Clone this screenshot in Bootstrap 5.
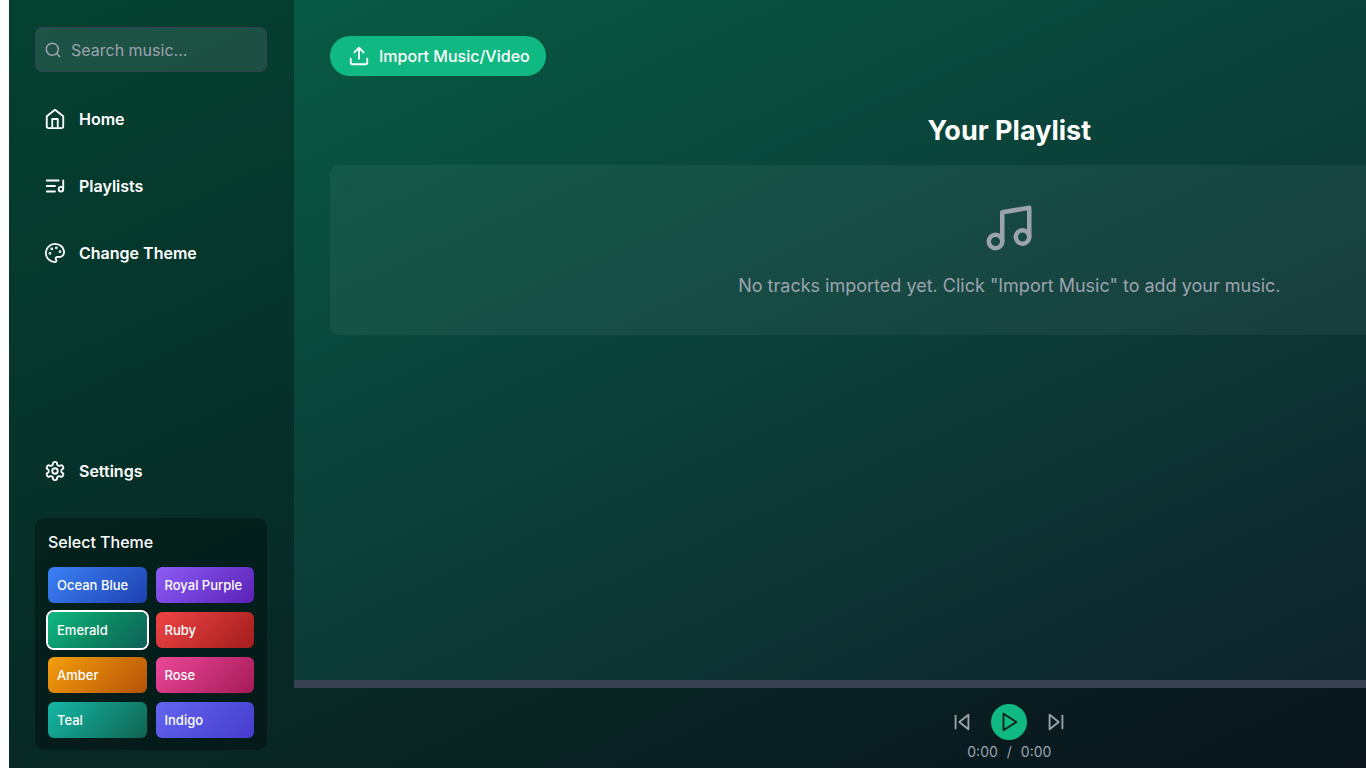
<!DOCTYPE html>
<html lang="en">
<head>
<meta charset="utf-8">
<meta name="viewport" content="width=device-width, initial-scale=1">
<title>Music Player</title>
<link href="https://cdn.jsdelivr.net/npm/bootstrap@5.3.0/dist/css/bootstrap.min.css" rel="stylesheet">
<style>
  body { font-family: Inter, "Liberation Sans", sans-serif; font-size: 16px; line-height: 24px; color: #fff; background: #fff; }
  svg { fill: none; stroke: currentColor; stroke-width: 2; stroke-linecap: round; stroke-linejoin: round; flex-shrink: 0; display: block; }
  .viewport { margin-left: 9px; overflow: hidden; }
  /* the player is wider than the window; its right part is clipped */
  .player { width: 125.6vw; height: 100vh; background: linear-gradient(to bottom right, #065f46, #111827); }
  .sidebar { width: 285px; flex-shrink: 0; padding: 27px 27px 18px 26px; background: rgba(0,0,0,.3); }
  .search-field { height: 45px; padding: 0 8px; gap: 9px; border: 1px solid #374151; border-radius: 7px; background: rgba(255,255,255,.1); color: #9ca3af; }
  .search-field input { background: none; border: 0; padding: 0; color: #fff; outline: 0; min-width: 0; }
  .search-field input::placeholder { color: #9ca3af; opacity: 1; }
  .side-link { height: 40px; padding: 0 9px; gap: 13px; color: #fff; font-weight: 600; text-decoration: none; border: 0; background: none; }
  .side-nav { margin-top: 27px; gap: 27px; }
  .theme-panel { margin-top: 27px; padding: 12px 13px; border-radius: 9px; background: rgba(0,0,0,.3); }
  .theme-panel h2 { font-size: 16px; line-height: 24px; font-weight: 500; margin: 0 0 13px; }
  .theme-grid { display: grid; grid-template-columns: repeat(2, minmax(0, 1fr)); gap: 9px; }
  .swatch { height: 36px; padding: 0 9px; border: 0; border-radius: 6px; color: #fff; font-size: 13px; font-weight: 500; text-align: left; white-space: nowrap; }
  .swatch.selected { box-shadow: 0 0 0 2px #fff; }
  .ocean { background: linear-gradient(135deg, #3b82f6, #1e40af); }
  .royal { background: linear-gradient(135deg, #8b5cf6, #5b21b6); }
  .emerald { background: linear-gradient(135deg, #10b981, #0a8a62, #10605a); }
  .ruby { background: linear-gradient(135deg, #ef4444, #a31d1d); }
  .amber { background: linear-gradient(135deg, #f59e0b, #b45309); }
  .rose { background: linear-gradient(135deg, #ec4899, #a51a56); }
  .teal { background: linear-gradient(135deg, #14b8a6, #0f6350); }
  .indigo { background: linear-gradient(135deg, #6366f1, #463bcc); }
  .stage { padding: 36px; }
  .import-btn { height: 40px; padding: 0 16px 0 18px; gap: 9px; border: 0; background: #10b981; color: #fff; font-weight: 500; }
  .stage h1 { font-size: 27px; line-height: 36px; font-weight: 700; margin: 37px 0 16px; }
  .empty-list { padding: 36px; border-radius: 9px; background: rgba(255,255,255,.05); color: #9ca3af; font-size: 18px; line-height: 27px; }
  .empty-list p { margin: 17px 0 0; }
  .seek { height: 8px; background: #374151; }
  .controls { height: 80px; padding-top: 16px; background: rgba(0,0,0,.3); color: #9ca3af; font-size: 14px; }
  .controls button { border: 0; padding: 0; background: none; color: inherit; }
  .controls .play-btn { width: 36px; height: 36px; background: #10b981; color: #06201c; }
  .transport { gap: 18px; }
  .time-row { gap: 9px; }
</style>
</head>
<body>
<div class="viewport">
<div class="player d-flex">
  <aside class="sidebar d-flex flex-column">
    <label class="search-field d-flex align-items-center">
      <svg width="18" height="18" viewBox="0 0 24 24"><circle cx="11" cy="11" r="8"/><path d="m21 21-4.300-4.300"/></svg>
      <input class="flex-fill" type="text" placeholder="Search music..." aria-label="Search music">
    </label>
    <nav class="side-nav d-flex flex-column">
      <a class="side-link d-flex align-items-center" href="#"><svg width="22" height="22" viewBox="0 0 24 24"><path d="m3 9 9-7 9 7v11a2 2 0 0 1-2 2H5a2 2 0 0 1-2-2z"/><path d="M9 22V12h6v10"/></svg>Home</a>
      <a class="side-link d-flex align-items-center" href="#"><svg width="22" height="22" viewBox="0 0 24 24"><path d="M21 15V6"/><path d="M18.500 18a2.500 2.500 0 1 0 0-5 2.500 2.500 0 0 0 0 5Z"/><path d="M12 12H3"/><path d="M16 6H3"/><path d="M12 18H3"/></svg>Playlists</a>
      <button type="button" class="side-link d-flex align-items-center"><svg width="22" height="22" viewBox="0 0 24 24"><circle cx="13.500" cy="6.500" r=".5" fill="currentColor"/><circle cx="17.500" cy="10.500" r=".5" fill="currentColor"/><circle cx="8.500" cy="7.500" r=".5" fill="currentColor"/><circle cx="6.500" cy="12.500" r=".5" fill="currentColor"/><path d="M12 2C6.500 2 2 6.500 2 12s4.500 10 10 10c.926 0 1.648-.746 1.648-1.688 0-.437-.18-.835-.437-1.125-.29-.289-.438-.652-.438-1.125a1.640 1.640 0 0 1 1.668-1.668h1.996c3.051 0 5.555-2.503 5.555-5.554C21.965 6.012 17.461 2 12 2z"/></svg>Change Theme</button>
    </nav>
    <button type="button" class="side-link d-flex align-items-center mt-auto"><svg width="22" height="22" viewBox="0 0 24 24"><path d="M12.220 2h-.44a2 2 0 0 0-2 2v.18a2 2 0 0 1-1 1.730l-.43.25a2 2 0 0 1-2 0l-.15-.08a2 2 0 0 0-2.730.73l-.22.38a2 2 0 0 0 .73 2.730l.15.1a2 2 0 0 1 1 1.720v.51a2 2 0 0 1-1 1.740l-.15.09a2 2 0 0 0-.73 2.730l.22.38a2 2 0 0 0 2.730.73l.15-.08a2 2 0 0 1 2 0l.43.25a2 2 0 0 1 1 1.730V20a2 2 0 0 0 2 2h.44a2 2 0 0 0 2-2v-.18a2 2 0 0 1 1-1.730l.43-.25a2 2 0 0 1 2 0l.15.08a2 2 0 0 0 2.730-.73l.22-.39a2 2 0 0 0-.73-2.730l-.15-.08a2 2 0 0 1-1-1.740v-.5a2 2 0 0 1 1-1.740l.15-.09a2 2 0 0 0 .73-2.730l-.22-.38a2 2 0 0 0-2.730-.73l-.15.08a2 2 0 0 1-2 0l-.43-.25a2 2 0 0 1-1-1.730V4a2 2 0 0 0-2-2z"/><circle cx="12" cy="12" r="3"/></svg>Settings</button>
    <section class="theme-panel">
      <h2>Select Theme</h2>
      <div class="theme-grid">
        <button type="button" class="swatch ocean">Ocean Blue</button>
        <button type="button" class="swatch royal">Royal Purple</button>
        <button type="button" class="swatch emerald selected">Emerald</button>
        <button type="button" class="swatch ruby">Ruby</button>
        <button type="button" class="swatch amber">Amber</button>
        <button type="button" class="swatch rose">Rose</button>
        <button type="button" class="swatch teal">Teal</button>
        <button type="button" class="swatch indigo">Indigo</button>
      </div>
    </section>
  </aside>
  <div class="d-flex flex-column flex-fill">
    <main class="stage flex-fill">
      <button type="button" class="import-btn rounded-pill d-inline-flex align-items-center"><svg width="22" height="22" viewBox="0 0 24 24"><path d="M21 15v4a2 2 0 0 1-2 2H5a2 2 0 0 1-2-2v-4"/><path d="m17 8-5-5-5 5"/><path d="M12 3v12"/></svg>Import Music/Video</button>
      <h1 class="text-center">Your Playlist</h1>
      <div class="empty-list d-flex flex-column align-items-center">
        <svg width="54" height="54" viewBox="0 0 24 24"><path d="M9 18V5l12-2v13"/><circle cx="6" cy="18" r="3"/><circle cx="18" cy="16" r="3"/></svg>
        <p>No tracks imported yet. Click "Import Music" to add your music.</p>
      </div>
    </main>
    <div class="seek"></div>
    <footer class="controls d-flex flex-column align-items-center">
      <div class="transport d-flex align-items-center">
        <button type="button" aria-label="Previous"><svg width="22" height="22" viewBox="0 0 24 24"><path d="M19 20 9 12l10-8v16z"/><path d="M5 19V5"/></svg></button>
        <button type="button" class="play-btn rounded-circle d-flex align-items-center justify-content-center" aria-label="Play"><svg width="22" height="22" viewBox="0 0 24 24"><path d="m6 3 14 9-14 9V3z"/></svg></button>
        <button type="button" aria-label="Next"><svg width="22" height="22" viewBox="0 0 24 24"><path d="m5 4 10 8-10 8V4z"/><path d="M19 5v14"/></svg></button>
      </div>
      <div class="time-row d-flex"><span>0:00</span><span>/</span><span>0:00</span></div>
    </footer>
  </div>
</div>
</div>
<script src="https://cdn.jsdelivr.net/npm/bootstrap@5.3.0/dist/js/bootstrap.bundle.min.js"></script>
</body>
</html>
